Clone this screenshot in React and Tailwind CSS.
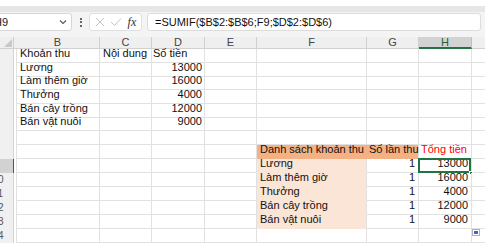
import React from "react";

const font = { fontFamily: '"Liberation Sans", Arial, sans-serif' };

const left = [
  ["Khoản thu", "Nội dung", "Số tiền"],
  ["Lương", "", "13000"],
  ["Làm thêm giờ", "", "16000"],
  ["Thưởng", "", "4000"],
  ["Bán cây trồng", "", "12000"],
  ["Bán vật nuôi", "", "9000"],
];

const right = [
  ["Lương", "1", "13000"],
  ["Làm thêm giờ", "1", "16000"],
  ["Thưởng", "1", "4000"],
  ["Bán cây trồng", "1", "12000"],
  ["Bán vật nuôi", "1", "9000"],
];

function RowHead({ n, active }) {
  // only the right edge of the row header is in view
  return (
    <div
      className={`w-[14px] shrink-0 overflow-hidden border-r ${
        active ? "bg-[#d2d2d2] border-[#217346]" : "bg-[#f0f0f0] border-[#d4d4d4]"
      }`}
    >
      <div className="ml-[-15px] w-[26px] text-center text-[10px] leading-[13px] text-[#555]">
        {n >= 10 ? n : ""}
      </div>
    </div>
  );
}

function Row({ n, h, children, active }) {
  return (
    <div className={`flex ${h}`}>
      <RowHead n={n} active={active} />
      <div className="w-[2px] shrink-0 bg-white" />
      {children}
    </div>
  );
}

const cell = "shrink-0 flex items-end pb-[1px] border-r border-b border-[#e1e1e1] whitespace-nowrap overflow-visible";

export default function App() {
  const rows = [];
  for (let i = 1; i <= 14; i++) {
    const h = i === 3 || i === 6 ? "h-[13px]" : "h-[14px]";
    const l = left[i - 1] || ["", "", ""];
    const isHead = i === 8;
    const r = i >= 9 && i <= 13 ? right[i - 9] : null;
    rows.push(
      <Row key={i} n={i} h={h} active={i === 9}>
        <div className={`${cell} w-[84px] border-l pl-[3px]`}>{l[0]}</div>
        <div className={`${cell} w-[52px] pl-[3px]`}>{l[1]}</div>
        <div className={`${cell} w-[53px] justify-end pr-[2px]`}>
          {i === 1 ? <span className="mr-auto pl-[1px]">{l[2]}</span> : l[2]}
        </div>
        <div className={`${cell} w-[52px]`} />
        {isHead ? (
          <>
            <div className={`${cell} w-[110px] pl-[3px] bg-[#f4b183] border-[#f4b183] border-b-[#f4b183]`}>
              Danh sách khoản thu
            </div>
            <div className={`${cell} w-[52px] pl-[2px] bg-[#f4b183] border-b-[#f4b183] border-r-[#e1e1e1]`}>
              Số lần thu
            </div>
            <div className={`${cell} w-[53px] pl-[2px] text-[#ff0000]`}>Tổng tiền</div>
          </>
        ) : r ? (
          <>
            <div className={`${cell} w-[110px] pl-[3px] bg-[#fbe5d6] border-b-[#fbe5d6]`}>{r[0]}</div>
            <div className={`${cell} w-[52px] justify-end pr-[3px]`}>{r[1]}</div>
            <div className={`${cell} w-[53px] justify-end pr-[3px] relative`}>
              {r[2]}
              {i === 9 && (
                <>
                  <div className="absolute left-[-1px] top-[-1px] w-[53px] h-[15px] border-2 border-[#217346]" />
                  <div className="absolute right-[-2px] bottom-[-3px] w-[4px] h-[4px] bg-[#217346] border border-white" />
                </>
              )}
            </div>
          </>
        ) : (
          <>
            <div className={`${cell} w-[110px]`} />
            <div className={`${cell} w-[52px]`} />
            <div className={`${cell} w-[53px]`} />
          </>
        )}
        <div className={`${cell} w-[20px]`} />
      </Row>
    );
  }

  return (
    <div className="w-[485px] h-[244px] overflow-hidden bg-white text-[11px] text-[#111] relative" style={font}>
      <div className="h-[6px] bg-white" />
      <div className="h-[6px] bg-[#e6e6e6]" />
      <div className="h-[25px] bg-[#f4f4f4] pt-[1px]">
        <div className="flex items-center h-[18px]">
          <div className="ml-[-12px] w-[84px] h-[18px] bg-white border border-[#d6d6d6] rounded-[3px] flex items-center pl-[5px] text-[11px] text-[#222]">
            <span>H9</span>
            <svg className="ml-auto mr-[4px]" width="8" height="6" viewBox="0 0 8 6">
              <path d="M1 1.5 L4 4.5 L7 1.5" fill="none" stroke="#555" strokeWidth="1.1" />
            </svg>
          </div>
          <div className="w-[17px] flex flex-col items-center gap-[1.5px]">
            <div className="w-[2px] h-[2px] bg-[#666]" />
            <div className="w-[2px] h-[2px] bg-[#666]" />
            <div className="w-[2px] h-[2px] bg-[#666]" />
          </div>
          <div className="w-[53px] h-[18px] bg-white border border-[#e0e0e0] rounded-[3px] flex items-center justify-around px-[2px]">
            <svg width="10" height="10" viewBox="0 0 10 10">
              <path d="M1 1 L9 9 M9 1 L1 9" stroke="#c4c4c4" strokeWidth="1" />
            </svg>
            <svg width="12" height="10" viewBox="0 0 12 10">
              <path d="M1 5 L4.5 8.5 L11 1.5" fill="none" stroke="#c4c4c4" strokeWidth="1" />
            </svg>
            <span className="text-[12px] italic text-[#333]" style={{ fontFamily: '"Liberation Serif", serif' }}>
              fx
            </span>
          </div>
          <div className="ml-[5px] w-[334px] h-[18px] bg-white border border-[#dcdcdc] rounded-[3px] flex items-center pl-[7px] text-[11px] text-[#111]">
            =SUMIF($B$2:$B$6;F9;$D$2:$D$6)
          </div>
        </div>
      </div>
      <div className="flex h-[12px] text-[11px] leading-[11px] text-[#444]">
        <div className="w-[14px] shrink-0 bg-[#efefef] border-r border-b border-[#d0d0d0] flex items-end justify-end pr-[1px] pb-[1px]">
          <svg width="8" height="8" viewBox="0 0 8 8">
            <path d="M8 0 L8 8 L0 8 Z" fill="#c8c8c8" />
          </svg>
        </div>
        <div className="w-[2px] shrink-0 bg-[#efefef] border-b border-[#d0d0d0]" />
        {[
          ["B", "w-[84px]"],
          ["C", "w-[52px]"],
          ["D", "w-[53px]"],
          ["E", "w-[52px]"],
          ["F", "w-[110px]"],
          ["G", "w-[52px]"],
        ].map(([c, w]) => (
          <div key={c} className={`${w} shrink-0 bg-[#efefef] border-r border-b border-[#d0d0d0] flex items-center justify-center`}>
            {c}
          </div>
        ))}
        <div className="w-[53px] shrink-0 bg-[#d3d3d3] border-r border-[#c0c0c0] border-b-2 border-b-[#217346] flex items-center justify-center text-[#1e5e3a]">
          H
        </div>
        <div className="w-[20px] shrink-0 bg-[#efefef] border-b border-[#d0d0d0]" />
      </div>
      {rows}
      <div className="absolute left-[472px] top-[229px] w-[8px] h-[7px] bg-white border border-[#b0b0b0]">
        <div className="w-[4px] h-[3px] bg-[#2b6cd6] mt-[1px] ml-[1px]" />
      </div>
    </div>
  );
}
